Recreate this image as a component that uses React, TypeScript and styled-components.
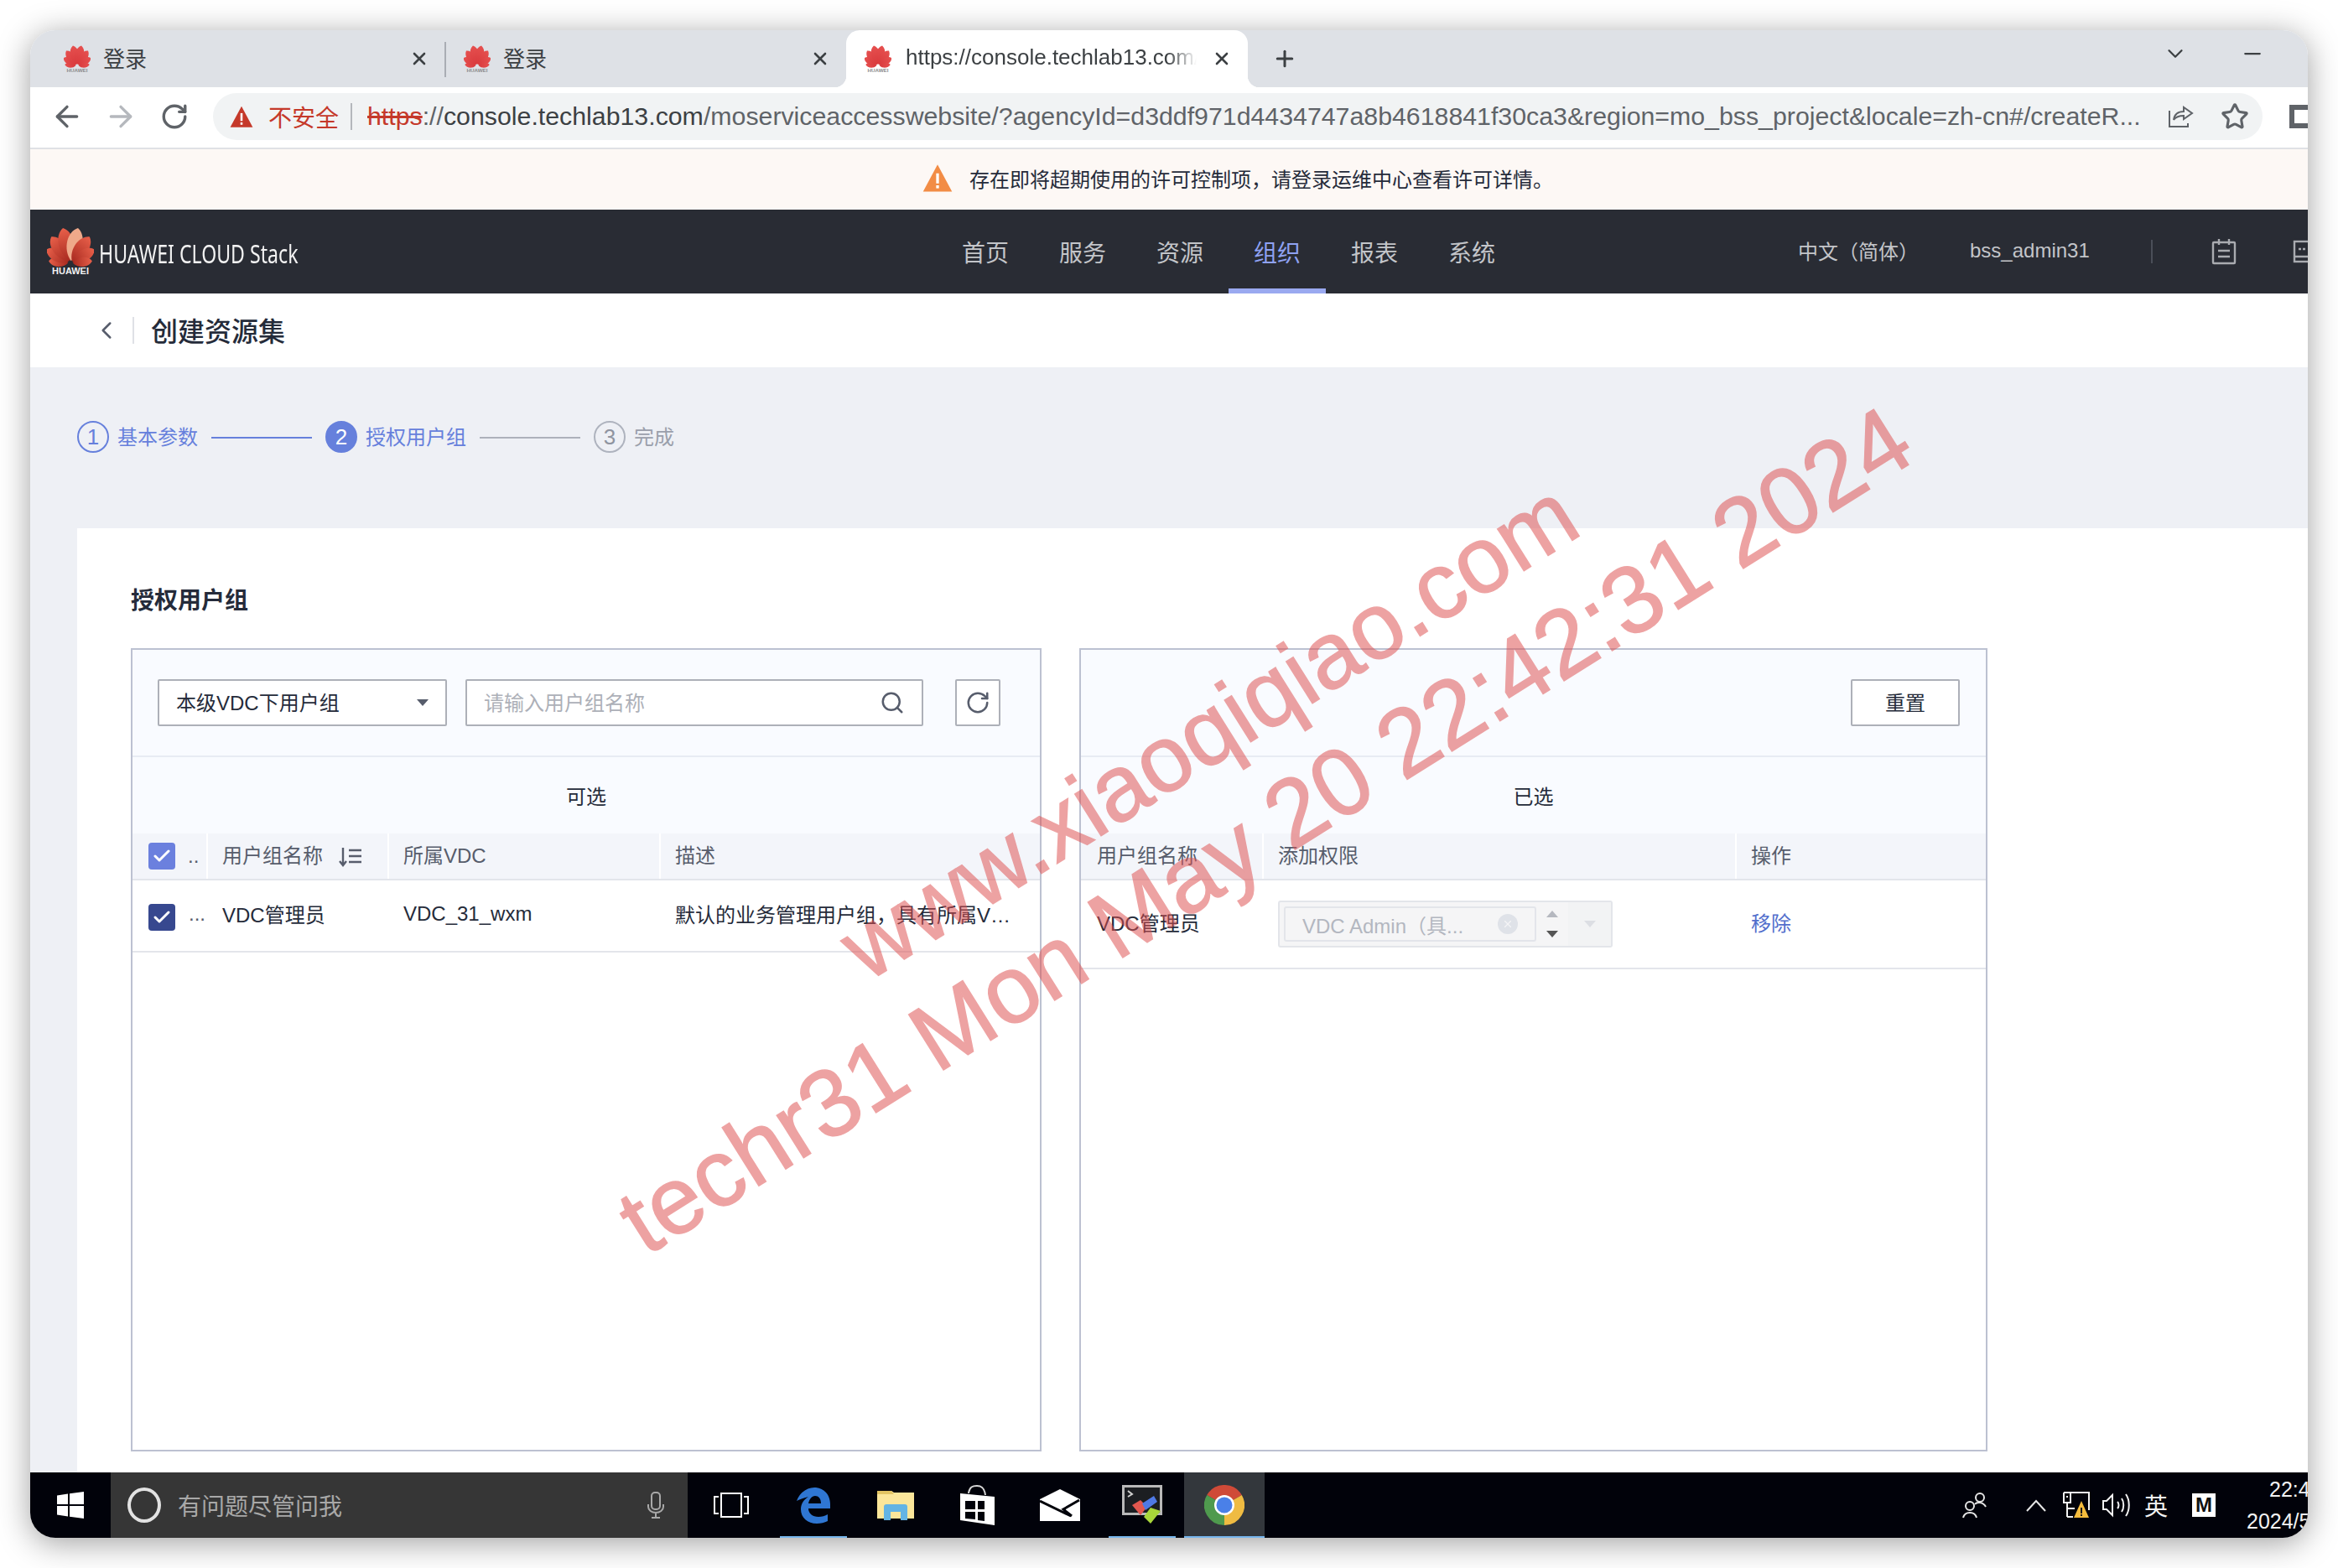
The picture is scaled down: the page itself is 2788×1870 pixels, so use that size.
import React from 'react'
import styled, { createGlobalStyle } from 'styled-components'
import { ArrowLeft, ArrowRight, Check, ChevronDown, ChevronLeft, Minus, Plus, RotateCw, Search, Star, X } from 'lucide-react'

const GlobalStyle = createGlobalStyle`
  html, body {
    margin: 0;
    padding: 0;
    background: #fff;
  }
  * {
    box-sizing: border-box;
  }
  body {
    font-family: "Liberation Sans", "Noto Sans CJK SC", sans-serif;
    color: #252b3a;
  }
`

const Page = styled.div`
  position: relative;
  width: 2788px;
  height: 1870px;
  padding: 36px;
  overflow: hidden;
  background: #fff;
`

const Window = styled.div`
  display: flex;
  flex-direction: column;
  height: 1798px;
  border-radius: 30px;
  overflow: hidden;
  box-shadow: 0 6px 38px rgba(0, 0, 0, 0.38);
  background: #fff;
`

const TabStrip = styled.div`
  display: flex;
  align-items: stretch;
  flex: 0 0 68px;
  background: #dee1e6;
`

const Tab = styled.div<{ $width: number; $pad: number; $active?: boolean }>`
  position: relative;
  display: flex;
  flex: none;
  align-items: center;
  width: ${p => p.$width}px;
  padding: 0 19px 0 ${p => p.$pad}px;
  background: ${p => (p.$active ? '#fff' : 'transparent')};
  border-radius: 16px 16px 0 0;

  &::before,
  &::after {
    content: '';
    display: ${p => (p.$active ? 'block' : 'none')};
    position: absolute;
    bottom: 0;
    width: 14px;
    height: 14px;
  }
  &::before {
    left: -14px;
    background: radial-gradient(circle at 0 0, transparent 14px, #fff 14.5px);
  }
  &::after {
    right: -14px;
    background: radial-gradient(circle at 100% 0, transparent 14px, #fff 14.5px);
  }
`

const TabTitle = styled.span<{ $fade?: boolean }>`
  margin-left: ${p => (p.$fade ? '17px' : '15px')};
  padding-bottom: 3px;
  font-size: 26px;
  color: #3c4043;
  white-space: nowrap;
  overflow: hidden;
  width: ${p => (p.$fade ? '347px' : 'auto')};
  mask-image: ${p => (p.$fade ? 'linear-gradient(to right, #000 90%, transparent)' : 'none')};
`

const TabClose = styled.span`
  margin-left: auto;
  display: flex;
  color: #3c4043;
`

const TabDivider = styled.span`
  flex: none;
  width: 2px;
  height: 42px;
  margin-top: 14px;
  margin-left: -1px;
  margin-right: -1px;
  background: #a9adb4;
`

const NewTab = styled.span`
  display: flex;
  align-items: center;
  margin-left: 29px;
  color: #3c4043;
`

const WindowControls = styled.div`
  display: flex;
  align-items: center;
  gap: 62px;
  margin-left: auto;
  padding: 0 51px 12px 0;
  color: #3c4043;
`

const AddressRow = styled.div`
  display: flex;
  align-items: center;
  flex: 0 0 74px;
  padding: 0 0 2px 12px;
  background: #fff;
  border-bottom: 2px solid #dfe1e5;
  overflow: hidden;
`

const ToolButton = styled.span<{ $muted?: boolean }>`
  display: flex;
  flex: none;
  justify-content: center;
  width: 64px;
  color: ${p => (p.$muted ? '#b5b8bd' : '#5f6368')};
`

const Omnibox = styled.div`
  display: flex;
  flex: none;
  align-items: center;
  width: 2444px;
  height: 56px;
  margin-left: 14px;
  padding-left: 20px;
  border-radius: 28px;
  background: #f1f3f4;
`

const InsecureText = styled.span`
  margin-left: 18px;
  font-size: 28px;
  color: #c5392a;
`

const OmniDivider = styled.span`
  width: 2px;
  height: 32px;
  margin: 0 18px 0 14px;
  background: #b4b7bc;
`

const UrlText = styled.span`
  flex: none;
  width: 2116px;
  font-family: "Liberation Sans", sans-serif;
  font-size: 30.3px;
  white-space: nowrap;
  overflow: hidden;
  color: #5f6368;
`

const UrlScheme = styled.span`
  color: #c5392a;
  text-decoration: line-through;
`

const UrlHost = styled.span`
  color: #3c4043;
`

const OmniAction = styled.span<{ $gap: number }>`
  display: flex;
  flex: none;
  margin-left: ${p => p.$gap}px;
  color: #5f6368;
`

const ProfileBox = styled.span`
  flex: none;
  width: 30px;
  height: 28px;
  margin-left: 32px;
  border: 6px solid #5f6368;
`

const Banner = styled.div`
  display: flex;
  align-items: center;
  gap: 20px;
  flex: 0 0 72px;
  padding: 0 0 4px 1064px;
  font-size: 24px;
  color: #252b3a;
  background: #fdf8f5;
`

const TopNav = styled.div`
  display: flex;
  align-items: stretch;
  flex: 0 0 100px;
  overflow: hidden;
  background: #292c34;
  color: #c3c5c9;
`

const Brand = styled.div`
  display: flex;
  flex: none;
  align-items: flex-start;
  width: 1081px;
  padding: 21px 0 0 20px;
`

const BrandName = styled.span`
  display: block;
  width: 280px;
  margin: 12px 0 0 6px;
  font-family: "Noto Sans", sans-serif;
  font-size: 31px;
  line-height: 38px;
  color: #f2f2f2;
  white-space: nowrap;
  transform: scaleX(0.746);
  transform-origin: 0 50%;
`

const MenuItem = styled.span<{ $active?: boolean }>`
  display: flex;
  flex: none;
  align-items: center;
  justify-content: center;
  width: 116px;
  font-size: 28px;
  color: ${p => (p.$active ? '#8fa2f2' : '#c3c5c9')};
  border-bottom: 6px solid ${p => (p.$active ? '#9aa9f0' : 'transparent')};
  padding-top: 6px;
`

const NavText = styled.span<{ $gap: number }>`
  align-self: center;
  flex: none;
  margin-left: ${p => p.$gap}px;
  margin-bottom: 3px;
  font-size: 24px;
  white-space: nowrap;
`

const NavDivider = styled.span`
  align-self: center;
  flex: none;
  width: 2px;
  height: 28px;
  margin-left: 73px;
  background: #4a4e58;
`

const NavIcon = styled.span<{ $gap: number }>`
  align-self: center;
  display: flex;
  flex: none;
  margin-left: ${p => p.$gap}px;
  color: #a9abb0;
`

const TitleBar = styled.div`
  display: flex;
  align-items: center;
  flex: 0 0 88px;
  padding-left: 74px;
  background: #fff;
  color: #575d6c;
`

const TitleDivider = styled.span`
  width: 2px;
  height: 32px;
  margin: 0 20px 0 14px;
  background: #dfe1e6;
`

const PageTitle = styled.h1`
  margin: 0 0 3px;
  font-size: 32px;
  font-weight: 500;
  color: #252b3a;
`

const Body = styled.div`
  display: flex;
  flex-direction: column;
  flex: 1;
  min-height: 0;
  padding-left: 56px;
  background: #eef0f5;
`

const Steps = styled.div`
  display: flex;
  align-items: center;
  height: 38px;
  margin: 64px 0 90px;
`

const StepCircle = styled.span<{ $state: 'done' | 'current' | 'todo' }>`
  display: flex;
  align-items: center;
  justify-content: center;
  width: 38px;
  height: 38px;
  border-radius: 50%;
  font-size: 26px;
  border: 2px solid ${p => (p.$state === 'todo' ? '#aeb3be' : '#6680dc')};
  background: ${p => (p.$state === 'current' ? '#6680dc' : 'transparent')};
  color: ${p => (p.$state === 'current' ? '#fff' : p.$state === 'done' ? '#6680dc' : '#8f94a0')};
`

const StepLabel = styled.span<{ $todo?: boolean }>`
  margin: 0 0 3px 10px;
  font-size: 24px;
  color: ${p => (p.$todo ? '#9a9fab' : '#6680dc')};
`

const StepLine = styled.span<{ $todo?: boolean }>`
  width: 120px;
  height: 2px;
  margin: 2px 16px 0;
  background: ${p => (p.$todo ? '#adb1bb' : '#6680dc')};
`

const Surface = styled.div`
  display: flex;
  flex-direction: column;
  flex: 1;
  min-height: 0;
  padding: 67px 0 25px 64px;
  background: #fff;
`

const SectionTitle = styled.h2`
  margin: 0 0 36px;
  font-size: 28px;
  line-height: 40px;
  font-weight: 700;
  color: #252b3a;
`

const Transfer = styled.div`
  display: grid;
  grid-template-columns: 1086px 1083px;
  column-gap: 45px;
  flex: 1;
  min-height: 0;
`

const Panel = styled.section`
  display: flex;
  flex-direction: column;
  border: 2px solid #bcc1d1;
  background: #fff;
`

const Toolbar = styled.div<{ $end?: boolean }>`
  display: flex;
  justify-content: ${p => (p.$end ? 'flex-end' : 'flex-start')};
  height: 128px;
  padding: 35px 31px 0 30px;
  background: #f9fbff;
  border-bottom: 2px solid #e8ebf3;
`

const FieldBox = styled.div<{ $width: number; $gap?: number }>`
  display: flex;
  align-items: center;
  justify-content: space-between;
  width: ${p => p.$width}px;
  height: 56px;
  margin-left: ${p => p.$gap ?? 0}px;
  padding: 0 20px;
  background: #fff;
  border: 2px solid #adb0b8;
  border-radius: 2px;
  font-size: 24px;
  color: #252b3a;
`

const FieldText = styled.span<{ $placeholder?: boolean }>`
  margin-bottom: 4px;
  color: ${p => (p.$placeholder ? '#adb0b8' : '#252b3a')};
`

const CaretDown = styled.span<{ $tone?: string }>`
  width: 0;
  height: 0;
  border-left: 7px solid transparent;
  border-right: 7px solid transparent;
  border-top: 8px solid ${p => p.$tone ?? '#575d6c'};
`

const CaretUp = styled.span`
  width: 0;
  height: 0;
  border-left: 7px solid transparent;
  border-right: 7px solid transparent;
  border-bottom: 8px solid #b5b8bf;
`

const IconButton = styled.button<{ $width: number; $gap?: number }>`
  display: flex;
  align-items: center;
  justify-content: center;
  width: ${p => p.$width}px;
  height: 56px;
  margin-left: ${p => p.$gap ?? 0}px;
  padding: 0;
  background: #fff;
  border: 2px solid #adb0b8;
  border-radius: 2px;
  font-family: inherit;
  font-size: 24px;
  color: #252b3a;
`

const PanelLabel = styled.div`
  display: flex;
  align-items: center;
  justify-content: center;
  height: 91px;
  font-size: 24px;
  color: #252b3a;
  background: #f9fbff;
`

const GridRow = styled.div<{ $cols: string; $height: number; $head?: boolean }>`
  display: grid;
  grid-template-columns: ${p => p.$cols};
  align-items: ${p => (p.$head ? 'stretch' : 'center')};
  height: ${p => p.$height}px;
  font-size: 24px;
  color: ${p => (p.$head ? '#575d6c' : '#252b3a')};
  background: ${p => (p.$head ? '#f3f5fa' : '#fff')};
  border-bottom: 2px solid #e3e5eb;
`

const HeadCell = styled.div<{ $first?: boolean; $box?: boolean }>`
  display: flex;
  align-items: center;
  gap: 19px;
  padding: 0 0 ${p => (p.$box ? '0' : '5px')} ${p => (p.$first ? '19px' : '17px')};
  border-left: ${p => (p.$first ? 'none' : '2px solid #fff')};
  white-space: nowrap;
  overflow: hidden;
`

const SortMark = styled.span`
  display: flex;
  margin-top: 5px;
`

const BodyCell = styled.div`
  display: flex;
  align-items: center;
  gap: 20px;
  min-width: 0;
  padding: 0 25px 5px 19px;
  white-space: nowrap;
`

const Clipped = styled.span`
  overflow: hidden;
  text-overflow: ellipsis;
`

const CheckBox = styled.span<{ $dark?: boolean }>`
  display: flex;
  flex: none;
  align-items: center;
  justify-content: center;
  width: 32px;
  height: 32px;
  margin-top: ${p => (p.$dark ? '8px' : '0')};
  border-radius: 4px;
  color: #fff;
  background: ${p => (p.$dark ? '#37488f' : '#6b80de')};
`

const Dots = styled.span`
  margin-left: -4px;
  color: #575d6c;
`

const ActionLink = styled.a`
  color: #526ecc;
`

const RoleSelect = styled.div`
  display: flex;
  align-items: stretch;
  width: 399px;
  height: 56px;
  padding: 5px 0 5px 5px;
  margin-bottom: -5px;
  background: #f5f5f6;
  border: 2px solid #e3e5ea;
  border-radius: 3px;
`

const RoleTag = styled.div`
  display: flex;
  align-items: center;
  justify-content: space-between;
  width: 301px;
  padding: 0 20px;
  background: #f5f5f6;
  border: 2px solid #e3e5ea;
  border-radius: 3px;
  color: #b3b7c0;
`

const ClearDot = styled.span`
  display: flex;
  align-items: center;
  justify-content: center;
  width: 24px;
  height: 24px;
  border-radius: 50%;
  background: #dfe2e8;
  color: #f5f5f6;
`

const Spinner = styled.div`
  display: flex;
  flex-direction: column;
  align-items: center;
  justify-content: center;
  gap: 16px;
  width: 38px;
`

const SpinDown = styled.div`
  display: flex;
  align-items: center;
  justify-content: center;
  flex: 1;
  margin: -5px 0;
  background: #f2f3f4;
`

const Taskbar = styled.footer`
  position: relative;
  display: flex;
  align-items: stretch;
  flex: 0 0 78px;
  background: #01020a;
  color: #fff;
`

const StartButton = styled.span`
  display: flex;
  flex: none;
  align-items: center;
  justify-content: center;
  width: 96px;
`

const SearchBox = styled.div`
  display: flex;
  flex: none;
  align-items: center;
  width: 688px;
  padding: 0 26px 0 20px;
  background: #363636;
  font-size: 28px;
  color: #a8a8a8;
`

const CortanaRing = styled.span`
  width: 40px;
  height: 42px;
  border: 4px solid #e2e2e2;
  border-radius: 50%;
`

const SearchHint = styled.span`
  margin-left: 20px;
  flex: 1;
`

const TaskButtons = styled.div`
  display: flex;
  gap: 2px;
  margin-left: 4px;
`

const TaskButton = styled.span<{ $running?: boolean; $focused?: boolean }>`
  position: relative;
  display: flex;
  flex: none;
  align-items: center;
  justify-content: center;
  width: 96px;
  background: ${p => (p.$focused ? '#33373c' : 'transparent')};

  &::after {
    content: '';
    display: ${p => (p.$running ? 'block' : 'none')};
    position: absolute;
    bottom: 0;
    left: ${p => (p.$focused ? '0' : '8px')};
    right: ${p => (p.$focused ? '0' : '8px')};
    height: 2px;
    background: #76b5ec;
  }
`

const Tray = styled.div`
  display: flex;
  align-items: center;
  margin-left: auto;
`

const TrayItem = styled.span<{ $gap: number }>`
  display: flex;
  flex: none;
  align-items: center;
  justify-content: center;
  margin-left: ${p => p.$gap}px;
  font-size: 28px;
  color: #f2f2f2;
`

const ImeMark = styled.span`
  display: flex;
  align-items: center;
  justify-content: center;
  width: 28px;
  height: 28px;
  background: #fff;
  color: #111;
  font-size: 24px;
  font-weight: 700;
`

const Clock = styled.div`
  flex: none;
  width: 73px;
  margin-left: 37px;
  font-size: 25px;
  line-height: 38px;
  white-space: nowrap;
  overflow: hidden;
  color: #f2f2f2;
`

const ClockTime = styled.div`
  padding-left: 27px;
`

const Watermark = styled.span<{ $left: number; $top: number; $size: number }>`
  position: absolute;
  left: ${p => p.$left}px;
  top: ${p => p.$top}px;
  font-family: "Liberation Sans", sans-serif;
  font-size: ${p => p.$size}px;
  line-height: 1;
  white-space: nowrap;
  color: #de4f4f;
  -webkit-text-stroke: 1.5px #de4f4f;
  opacity: 0.52;
  pointer-events: none;
  transform: rotate(-32.1deg);
  transform-origin: 0 ${p => p.$size * 0.8465}px;
`

const petals = [
  { a: -84, l: 26 },
  { a: -60, l: 33 },
  { a: -36, l: 39 },
  { a: -12, l: 43 },
  { a: 12, l: 43 },
  { a: 36, l: 39 },
  { a: 60, l: 33 },
  { a: 84, l: 26 },
]

const HuaweiMark = ({ width, height, glow }: { width: number; height: number; glow?: boolean }) => (
  <svg width={width} height={height} viewBox="0 0 56 58">
    <defs>
      <linearGradient id={glow ? 'petalGlow' : 'petalFlat'} x1="0" y1="0" x2="0" y2="1">
        <stop offset="0" stopColor={glow ? '#e8604a' : '#e6504f'} />
        <stop offset="1" stopColor={glow ? '#a82a20' : '#d93a3d'} />
      </linearGradient>
    </defs>
    {petals.map((p, i) => (
      <path
        key={i}
        d={`M0 -3 C -${p.l * 0.3} -${p.l * 0.35} -${p.l * 0.27} -${p.l * 0.85} 0 -${p.l} C ${p.l * 0.27} -${p.l * 0.85} ${p.l * 0.3} -${p.l * 0.35} 0 -3Z`}
        transform={`translate(28 43) rotate(${p.a})`}
        fill={glow && i === 4 ? '#efa98a' : `url(#${glow ? 'petalGlow' : 'petalFlat'})`}
      />
    ))}
    <text x="28" y="56" textAnchor="middle" fontFamily="Liberation Sans, sans-serif" fontSize="11" fontWeight="700" fill={glow ? '#f2f2f2' : '#8b8b8b'}>
      HUAWEI
    </text>
  </svg>
)

const WarnTriangle = ({ size, fill }: { size: number; fill: string }) => (
  <svg width={size} height={size} viewBox="0 0 24 24">
    <path d="M12 1.5 L23.5 23 H0.5Z" fill={fill} />
    <rect x="10.9" y="8.5" width="2.2" height="8" fill="#fff" />
    <rect x="10.9" y="18" width="2.2" height="2.4" fill="#fff" />
  </svg>
)

const ShareIcon = () => (
  <svg width="32" height="30" viewBox="0 0 32 30" fill="none" stroke="currentColor" strokeWidth="2">
    <path d="M2 8V27H24V23" />
    <path d="M7 19C8 12 13 9 19 9V4L29 11L19 18V14C14 14 10 15 7 19Z" />
  </svg>
)

const CalendarIcon = () => (
  <svg width="30" height="32" viewBox="0 0 30 32" fill="none" stroke="currentColor" strokeWidth="2.4">
    <rect x="2" y="5" width="26" height="25" rx="1" />
    <path d="M9 1V8M21 1V8M8 15H22M8 22H22" />
  </svg>
)

const ConsoleIcon = () => (
  <svg width="30" height="28" viewBox="0 0 30 28" fill="none" stroke="currentColor" strokeWidth="2.4">
    <rect x="2" y="2" width="36" height="24" />
    <path d="M2 20H38M7 11H10M12 11H15" />
  </svg>
)

const SortIcon = () => (
  <svg width="28" height="26" viewBox="0 0 28 26" fill="none" stroke="#575d6c" strokeWidth="2.4">
    <path d="M12 6H27M12 13H27M12 20H27M5 3V23M1 19L5 24L9 19" />
  </svg>
)

const WindowsLogo = () => (
  <svg width="32" height="32" viewBox="0 0 32 32" fill="#fff">
    <path d="M0 4.5 13 2.6V15H0Z" />
    <path d="M15 2.3 32 0V15H15Z" />
    <path d="M0 17H13V29.4L0 27.5Z" />
    <path d="M15 17H32V32L15 29.7Z" />
  </svg>
)

const MicIcon = () => (
  <svg width="24" height="32" viewBox="0 0 24 32" fill="none" stroke="#a8a8a8" strokeWidth="2">
    <rect x="7" y="1" width="10" height="20" rx="4" />
    <path d="M3 15V18C3 22 7 25 12 25C17 25 21 22 21 18V15M12 25V31M7 31H17" />
  </svg>
)

const TaskViewIcon = () => (
  <svg width="42" height="30" viewBox="0 0 42 30" fill="none" stroke="#fff" strokeWidth="2">
    <rect x="9" y="1" width="24" height="28" />
    <path d="M6 5H1V25H6M36 5H41V25H36" />
  </svg>
)

const EdgeIcon = () => (
  <svg width="40" height="44" viewBox="0 0 40 44">
    <path
      fillRule="evenodd"
      fill="#2f76d2"
      d="M0 17C4 6 14 0 23 1C33 2 40 10 40 21V26H14C14 32 19 36 26 36C30 36 34 35 37 33V41C33 43 29 44 24 44C13 44 5 37 5 27C5 20 9 15 14 12C8 14 3 15 0 17ZM14 20H29C29 14 26 11 22 11C18 11 15 15 14 20Z"
    />
  </svg>
)

const FolderIcon = () => (
  <svg width="44" height="36" viewBox="0 0 44 36">
    <path d="M0 1H17L20 3H44V34H0Z" fill="#fbe69a" />
    <path d="M0 1H17L20 5H0Z" fill="#e2c463" />
    <path d="M8 36V20C8 18 9 17 11 17H33C35 17 36 18 36 20V36H28V27H16V36Z" fill="#63b4e4" />
    <rect x="16" y="26" width="12" height="6" fill="#fbe69a" />
  </svg>
)

const StoreIcon = () => (
  <svg width="42" height="48" viewBox="0 0 42 48">
    <path d="M10 10C11 2 15 1 20 1C26 1 29 4 30 12" fill="none" stroke="#d8d8d8" strokeWidth="2" />
    <path d="M0 10 41 14V48L0 42Z" fill="#fff" />
    <path d="M6 19H18V29H6ZM21 19H29V29H21ZM6 32H18V41L6 40ZM21 32H29V43L21 42Z" fill="#01020a" />
  </svg>
)

const MailIcon = () => (
  <svg width="48" height="38" viewBox="0 0 48 38">
    <path d="M0 12 24 0 48 12V38H0Z" fill="#fff" />
    <path d="M0 14 37 32M47 13 28 24 38 32" fill="none" stroke="#01020a" strokeWidth="3" />
  </svg>
)

const TerminalIcon = () => (
  <svg width="48" height="48" viewBox="0 0 48 48">
    <rect x="1.5" y="1.5" width="45" height="33" fill="#1c1e22" stroke="#b9b9b9" strokeWidth="3" />
    <path d="M7 7 12 11 7 14" fill="none" stroke="#d0d0d0" strokeWidth="2" />
    <path d="M12 24 22 18 30 26 22 36Z" fill="#e2574f" />
    <path d="M24 22 38 13 42 20 28 30Z" fill="#4f79e6" />
    <path d="M26 38 34 27 46 31 34 46Z" fill="#a8d63a" />
  </svg>
)

const ChromeIcon = () => (
  <svg width="48" height="48" viewBox="0 0 48 48">
    <path d="M24 24 3.2 12A24 24 0 0 1 44.8 12Z" fill="#cf4a38" />
    <path d="M24 24 44.8 12A24 24 0 0 1 24 48Z" fill="#efbb42" />
    <path d="M24 24 24 48A24 24 0 0 1 3.2 12Z" fill="#4f9a4e" />
    <circle cx="24" cy="24" r="12" fill="#fff" />
    <circle cx="24" cy="24" r="9.5" fill="#4a80e8" />
  </svg>
)

const PeopleIcon = () => (
  <svg width="30" height="32" viewBox="0 0 30 32" fill="none" stroke="#e6e6e6" strokeWidth="2">
    <circle cx="21" cy="7" r="5" />
    <path d="M15 15C17 12 25 12 28 18" />
    <circle cx="9" cy="17" r="5" />
    <path d="M1 31C3 23 15 23 17 31" />
  </svg>
)

const ChevronTray = () => (
  <svg width="24" height="16" viewBox="0 0 24 16" fill="none" stroke="#e6e6e6" strokeWidth="2">
    <path d="M1 15 12 3 23 15" />
  </svg>
)

const NetworkIcon = () => (
  <svg width="32" height="32" viewBox="0 0 32 32">
    <path d="M1 1H31V22M1 1V13H9V1M5 13V30M5 20H14M5 30H12M4 6H6" fill="none" stroke="#f2f2f2" strokeWidth="2" />
    <path d="M22 11 31 31H13Z" fill="#f5bc3d" />
    <path d="M21 19H23V26H21ZM21 27H23V29H21Z" fill="#1b1b1b" />
  </svg>
)

const SpeakerIcon = () => (
  <svg width="34" height="30" viewBox="0 0 34 30" fill="none" stroke="#f2f2f2" strokeWidth="2">
    <path d="M1 10H5L12 3V27L5 20H1Z" />
    <path d="M18 11C20 13 20 17 18 19M23 7C26 11 26 19 23 23M28 2C33 9 33 21 28 28" />
  </svg>
)

const leftCols = '88px 216px 324px 1fr'
const rightCols = '216px 564px 1fr'

const App: React.FC = () => {
  return (
    <>
      <GlobalStyle />
      <Page>
        <Window>
          <TabStrip>
            <Tab $width={495} $pad={40}>
              <HuaweiMark width={32} height={33} />
              <TabTitle>登录</TabTitle>
              <TabClose>
                <X size={24} strokeWidth={2.6} />
              </TabClose>
            </Tab>
            <TabDivider />
            <Tab $width={478} $pad={22}>
              <HuaweiMark width={32} height={33} />
              <TabTitle>登录</TabTitle>
              <TabClose>
                <X size={24} strokeWidth={2.6} />
              </TabClose>
            </Tab>
            <Tab $width={479} $pad={22} $active>
              <HuaweiMark width={32} height={33} />
              <TabTitle $fade>https://console.techlab13.com/moserviceaccesswebsite</TabTitle>
              <TabClose>
                <X size={24} strokeWidth={2.6} />
              </TabClose>
            </Tab>
            <NewTab>
              <Plus size={30} strokeWidth={2.4} />
            </NewTab>
            <WindowControls>
              <ChevronDown size={30} strokeWidth={1.8} />
              <Minus size={30} strokeWidth={1.8} />
            </WindowControls>
          </TabStrip>

          <AddressRow>
            <ToolButton>
              <ArrowLeft size={40} strokeWidth={2} />
            </ToolButton>
            <ToolButton $muted>
              <ArrowRight size={40} strokeWidth={2} />
            </ToolButton>
            <ToolButton>
              <RotateCw size={34} strokeWidth={2.4} />
            </ToolButton>
            <Omnibox>
              <WarnTriangle size={28} fill="#c5392a" />
              <InsecureText>不安全</InsecureText>
              <OmniDivider />
              <UrlText>
                <UrlScheme>https</UrlScheme>://<UrlHost>console.techlab13.com</UrlHost>
                /moserviceaccesswebsite/?agencyId=d3ddf971d4434747a8b4618841f30ca3&amp;region=mo_bss_project&amp;locale=zh-cn#/createR...
              </UrlText>
              <OmniAction $gap={31}>
                <ShareIcon />
              </OmniAction>
              <OmniAction $gap={31}>
                <Star size={34} strokeWidth={2.2} />
              </OmniAction>
            </Omnibox>
            <ProfileBox />
          </AddressRow>

          <Banner>
            <WarnTriangle size={36} fill="#f28c45" />
            <span>存在即将超期使用的许可控制项，请登录运维中心查看许可详情。</span>
          </Banner>

          <TopNav>
            <Brand>
              <HuaweiMark width={56} height={58} glow />
              <BrandName>HUAWEI CLOUD Stack</BrandName>
            </Brand>
            <MenuItem>首页</MenuItem>
            <MenuItem>服务</MenuItem>
            <MenuItem>资源</MenuItem>
            <MenuItem $active>组织</MenuItem>
            <MenuItem>报表</MenuItem>
            <MenuItem>系统</MenuItem>
            <NavText $gap={331}>中文（简体）</NavText>
            <NavText $gap={61}>bss_admin31</NavText>
            <NavDivider />
            <NavIcon $gap={70}>
              <CalendarIcon />
            </NavIcon>
            <NavIcon $gap={67}>
              <ConsoleIcon />
            </NavIcon>
          </TopNav>

          <TitleBar>
            <ChevronLeft size={34} strokeWidth={1.8} />
            <TitleDivider />
            <PageTitle>创建资源集</PageTitle>
          </TitleBar>

          <Body>
            <Steps>
              <StepCircle $state="done">1</StepCircle>
              <StepLabel>基本参数</StepLabel>
              <StepLine />
              <StepCircle $state="current">2</StepCircle>
              <StepLabel>授权用户组</StepLabel>
              <StepLine $todo />
              <StepCircle $state="todo">3</StepCircle>
              <StepLabel $todo>完成</StepLabel>
            </Steps>

            <Surface>
              <SectionTitle>授权用户组</SectionTitle>
              <Transfer>
                <Panel>
                  <Toolbar>
                    <FieldBox $width={345}>
                      <FieldText>本级VDC下用户组</FieldText>
                      <CaretDown />
                    </FieldBox>
                    <FieldBox $width={546} $gap={22}>
                      <FieldText $placeholder>请输入用户组名称</FieldText>
                      <Search size={30} strokeWidth={2} color="#575d6c" />
                    </FieldBox>
                    <IconButton $width={54} $gap={38}>
                      <RotateCw size={30} strokeWidth={2} color="#575d6c" />
                    </IconButton>
                  </Toolbar>
                  <PanelLabel>可选</PanelLabel>
                  <GridRow $cols={leftCols} $height={56} $head>
                    <HeadCell $first $box>
                      <CheckBox>
                        <Check size={24} strokeWidth={3} />
                      </CheckBox>
                      <Dots>..</Dots>
                    </HeadCell>
                    <HeadCell>
                      用户组名称
                      <SortMark>
                        <SortIcon />
                      </SortMark>
                    </HeadCell>
                    <HeadCell>所属VDC</HeadCell>
                    <HeadCell>描述</HeadCell>
                  </GridRow>
                  <GridRow $cols={leftCols} $height={86}>
                    <BodyCell>
                      <CheckBox $dark>
                        <Check size={24} strokeWidth={3} />
                      </CheckBox>
                      <Dots>...</Dots>
                    </BodyCell>
                    <BodyCell>VDC管理员</BodyCell>
                    <BodyCell>VDC_31_wxm</BodyCell>
                    <BodyCell>
                      <Clipped>默认的业务管理用户组，具有所属VDC的所有权限</Clipped>
                    </BodyCell>
                  </GridRow>
                </Panel>

                <Panel>
                  <Toolbar $end>
                    <IconButton $width={130}>
                      <FieldText>重置</FieldText>
                    </IconButton>
                  </Toolbar>
                  <PanelLabel>已选</PanelLabel>
                  <GridRow $cols={rightCols} $height={56} $head>
                    <HeadCell $first>用户组名称</HeadCell>
                    <HeadCell>添加权限</HeadCell>
                    <HeadCell>操作</HeadCell>
                  </GridRow>
                  <GridRow $cols={rightCols} $height={106}>
                    <BodyCell>VDC管理员</BodyCell>
                    <BodyCell>
                      <RoleSelect>
                        <RoleTag>
                          <span>VDC Admin（具...</span>
                          <ClearDot>
                            <X size={14} strokeWidth={2} />
                          </ClearDot>
                        </RoleTag>
                        <Spinner>
                          <CaretUp />
                          <CaretDown $tone="#555" />
                        </Spinner>
                        <SpinDown>
                          <CaretDown $tone="#dcdee3" />
                        </SpinDown>
                      </RoleSelect>
                    </BodyCell>
                    <BodyCell>
                      <ActionLink>移除</ActionLink>
                    </BodyCell>
                  </GridRow>
                </Panel>
              </Transfer>
            </Surface>
          </Body>

          <Taskbar>
            <StartButton>
              <WindowsLogo />
            </StartButton>
            <SearchBox>
              <CortanaRing />
              <SearchHint>有问题尽管问我</SearchHint>
              <MicIcon />
            </SearchBox>
            <TaskButtons>
              <TaskButton>
                <TaskViewIcon />
              </TaskButton>
              <TaskButton $running>
                <EdgeIcon />
              </TaskButton>
              <TaskButton>
                <FolderIcon />
              </TaskButton>
              <TaskButton>
                <StoreIcon />
              </TaskButton>
              <TaskButton>
                <MailIcon />
              </TaskButton>
              <TaskButton $running>
                <TerminalIcon />
              </TaskButton>
              <TaskButton $running $focused>
                <ChromeIcon />
              </TaskButton>
            </TaskButtons>
            <Tray>
              <TrayItem $gap={0}>
                <PeopleIcon />
              </TrayItem>
              <TrayItem $gap={46}>
                <ChevronTray />
              </TrayItem>
              <TrayItem $gap={20}>
                <NetworkIcon />
              </TrayItem>
              <TrayItem $gap={15}>
                <SpeakerIcon />
              </TrayItem>
              <TrayItem $gap={16}>英</TrayItem>
              <TrayItem $gap={29}>
                <ImeMark>M</ImeMark>
              </TrayItem>
              <Clock>
                <ClockTime>22:42</ClockTime>
                <div>2024/5/20</div>
              </Clock>
            </Tray>
          </Taskbar>
        </Window>
        <Watermark $left={1034} $top={1078} $size={111.5}>www.xiaoqiqiao.com</Watermark>
        <Watermark $left={770} $top={1403} $size={113.5}>techr31 Mon May 20 22:42:31 2024</Watermark>
      </Page>
    </>
  )
}

export default App
